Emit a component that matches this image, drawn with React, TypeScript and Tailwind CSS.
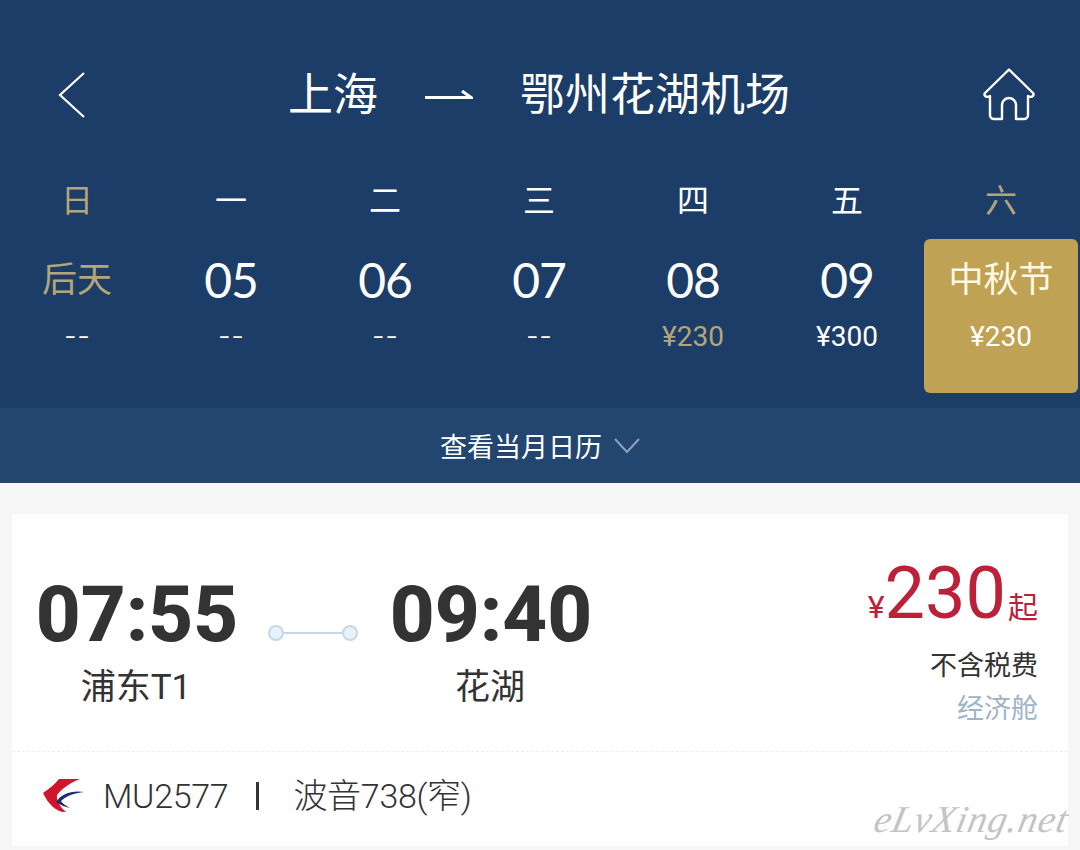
import React from 'react';

const cjk = "font-['Roboto','Noto_Sans_CJK_SC',sans-serif]";

// Calendar strip data
const days = [
  { week: '日', date: '后天', price: '--', gold: true },
  { week: '一', date: '05', price: '--' },
  { week: '二', date: '06', price: '--' },
  { week: '三', date: '07', price: '--' },
  { week: '四', date: '08', price: '¥230', goldPrice: true },
  { week: '五', date: '09', price: '¥300' },
  { week: '六', date: '中秋节', price: '¥230', selected: true, goldWeek: true },
];

function AirlineLogo() {
  return (
    <svg width="44" height="36" viewBox="0 0 44 36" className="shrink-0">
      <path d="M17 1 L38 1 C30 4 20 10 15 17 C14 22 18 29 24 34 C15 35 6 26 1 15 C7 11 13 6 17 1Z" fill="#d2152b" />
      <path d="M42 14 C30 12 19 16 14 24 C18 27 23 29 28 30 C23 27 20 25 19 23 C24 18 32 15 42 14Z" fill="#1d2a78" />
    </svg>
  );
}

export default function App() {
  return (
    <div className={`${cjk} w-[1080px] h-[850px] overflow-hidden bg-[#f6f6f6]`}>
      {/* Top navy header */}
      <div className="bg-[#1c3d67] h-[408px]">
        <div className="h-[150px] pt-[40px] flex items-center justify-between pl-[57px] pr-[45px]">
          <svg width="30" height="46" viewBox="0 0 30 46" fill="none" stroke="#fff" strokeWidth="2.2">
            <path d="M27 1 L3 23 L27 45" />
          </svg>
          <div className="flex items-center text-white text-[45px] leading-none ml-[8px]">
            <span>上海</span>
            <svg width="48" height="12" viewBox="0 0 48 12" fill="none" stroke="#fff" strokeWidth="3" className="ml-[47px] mr-[47px] mt-[-3px]">
              <path d="M0 9.5 H46 L37 3" />
            </svg>
            <span>鄂州花湖机场</span>
          </div>
          <svg width="52" height="54" viewBox="0 0 52 54" fill="none" stroke="#fff" strokeWidth="2.4" strokeLinejoin="round">
            <path d="M26 1.5 L2 25 C0 28 4 30 7 28 V47 a4 4 0 0 0 4 4 h8 V37 a7 7 0 0 1 14 0 V51 h8 a4 4 0 0 0 4 -4 V28 C48 30 52 28 50 25 Z" />
          </svg>
        </div>

        <div className="grid grid-cols-[repeat(7,154px)] mt-[30px]">
          {days.map((d) => (
            <div key={d.week} className="flex flex-col items-center">
              <div className={`h-[42px] flex items-center text-[32px] leading-none ${d.gold || d.goldWeek ? 'text-[#b5a67a]' : 'text-white'}`}>
                {d.week}
              </div>
              <div className={`mt-[17px] w-[154px] h-[154px] rounded-[6px] flex flex-col items-center ${d.selected ? 'bg-[#bfa254]' : ''}`}>
                <div className={`mt-[14px] h-[54px] flex items-center leading-none ${/\d/.test(d.date) ? "font-['Lato'] text-[48px] text-white tracking-[-1px]" : 'text-[35px]'} ${d.gold ? 'text-[#b5a67a]' : d.selected ? 'text-[#fff9e4]' : ''}`}>
                  {d.date}
                </div>
                <div className={`mt-[10px] h-[40px] flex items-center leading-none ${d.price === '--' ? 'text-[36px] font-light tracking-[3px] pl-[3px]' : 'text-[28px]'} ${d.goldPrice ? 'text-[#b5a67a]' : 'text-white'}`}>
                  {d.price}
                </div>
              </div>
            </div>
          ))}
        </div>
      </div>

      {/* Month toggle */}
      <div className="h-[75px] bg-[#22466f] flex items-center justify-center gap-[12px] text-white text-[27px]">
        <span className="mt-[6px]">查看当月日历</span>
        <svg width="26" height="16" viewBox="0 0 26 16" fill="none" stroke="#8ea2bd" strokeWidth="2">
          <path d="M1 1 L13 14 L25 1" />
        </svg>
      </div>

      {/* Flight card */}
      <div className="relative mx-[12px] mt-[31px] h-[332px] bg-white">
        <div className="h-[238px] flex border-b border-dashed border-[#eeeeee] pl-[25px] pr-[30px]">
          <div className="w-[200px] mt-[62px] flex flex-col items-center text-[#333333]">
            <div className="text-[78px] leading-[78px] font-extrabold">07:55</div>
            <div className="text-[35px] leading-[40px] mt-[14px] mr-[2px]">浦东T1</div>
          </div>
          <div className="mt-[111px] ml-[31px] w-[90px] h-[16px] flex items-center">
            <div className="w-[16px] h-[16px] rounded-full bg-[#e9f2fb] border-2 border-[#c5d8ea]" />
            <div className="flex-1 h-[2px] bg-[#c5d8ea]" />
            <div className="w-[16px] h-[16px] rounded-full bg-[#e9f2fb] border-2 border-[#c5d8ea]" />
          </div>
          <div className="w-[200px] ml-[33px] mt-[62px] flex flex-col items-center text-[#333333]">
            <div className="text-[78px] leading-[78px] font-extrabold">09:40</div>
            <div className="text-[35px] leading-[40px] mt-[14px] mr-[2px]">花湖</div>
          </div>
          <div className="ml-auto mt-[40px] flex flex-col items-end">
            <div className="flex items-baseline text-[#bb2138] leading-none h-[80px]">
              <span className="text-[32px]">¥</span>
              <span className="text-[72px] leading-[80px]">230</span>
              <span className="text-[30px] ml-[2px]">起</span>
            </div>
            <div className="text-[27px] leading-[36px] text-[#333333] mt-[14px]">不含税费</div>
            <div className="text-[27px] leading-[36px] text-[#9db4c8] mt-[7px]">经济舱</div>
          </div>
        </div>
        <div className="h-[88px] flex items-center pl-[30px] text-[34px] font-light tracking-[-0.3px] text-[#333333]">
          <AirlineLogo />
          <span className="ml-[17px]">MU2577</span>
          <div className="ml-[28px] w-[3px] h-[28px] bg-[#333333]" />
          <span className="ml-[34px]">波音738(窄)</span>
        </div>
        {/* Watermark */}
        <div className="absolute left-[863px] top-[286px] -skew-x-12 font-['Liberation_Serif',serif] italic text-[38px] leading-none tracking-[1px] text-[#c4c4c4] whitespace-nowrap">
          eLvXing.net
        </div>
      </div>
    </div>
  );
}
